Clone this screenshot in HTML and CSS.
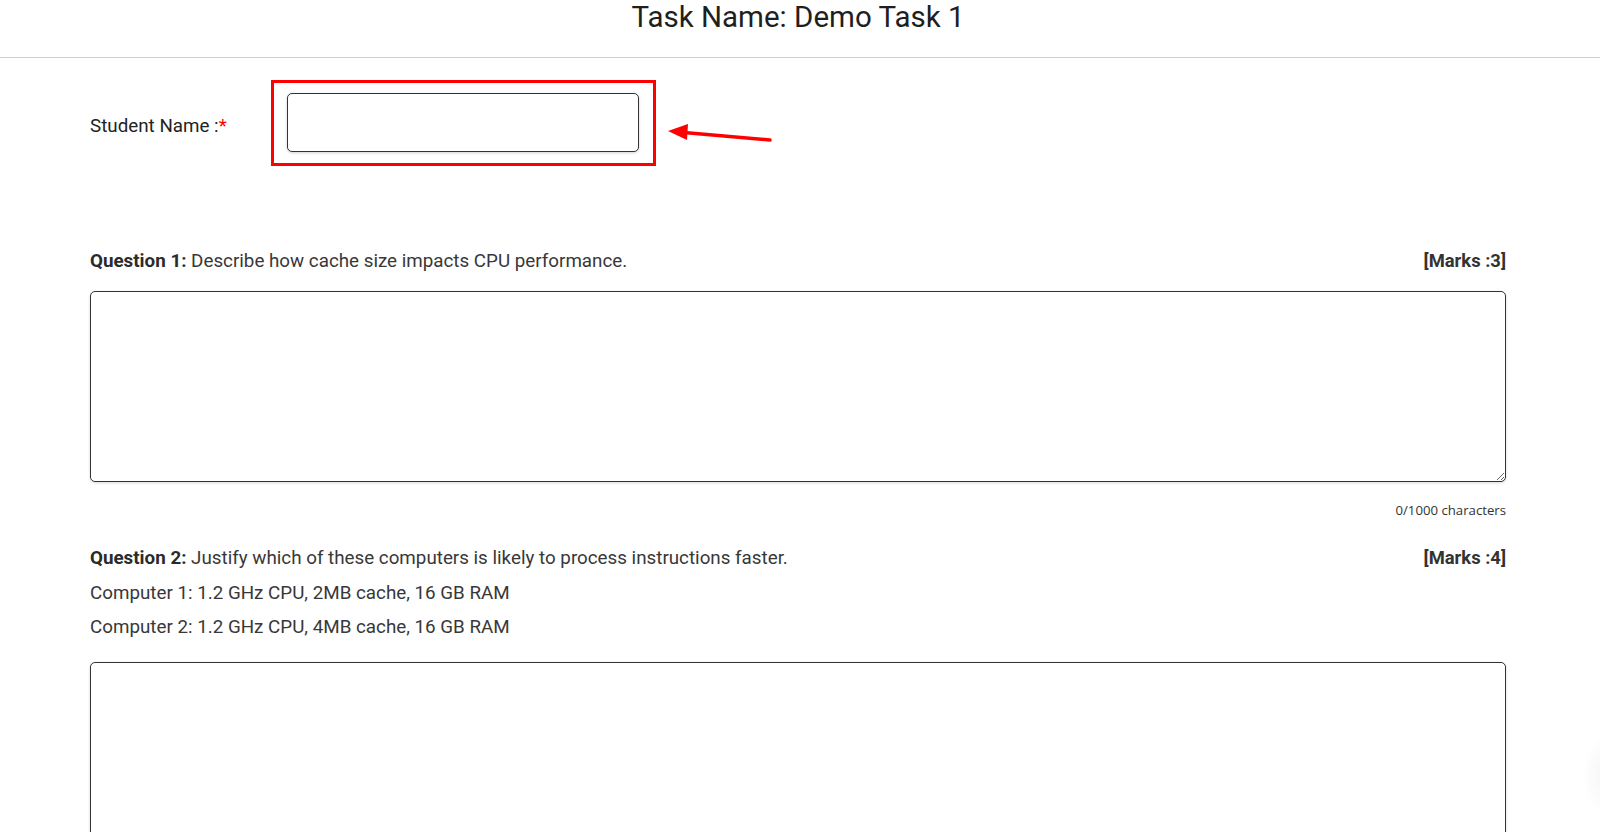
FILE: index.html
```html
<!DOCTYPE html>
<html lang="en">
<head>
<meta charset="utf-8">
<title>Task Name: Demo Task 1</title>
<link rel="stylesheet" href="styles.css">
</head>
<body>
<header class="top-bar">
  <h1 class="task-title">Task Name: Demo Task 1</h1>
</header>
<main class="content">
  <div class="student-row">
    <label class="student-label" for="student">Student Name :<span class="req">*</span></label>
    <div class="input-wrap">
      <input id="student" class="student-input" type="text">
      <span class="highlight-box"></span>
      <svg class="arrow" width="110" height="24" viewBox="0 0 110 24">
        <line x1="104" y1="19" x2="18" y2="11.5" stroke="#f00" stroke-width="3.5" stroke-linecap="round"/>
        <polygon points="2,10 22,3 21,19" fill="#f00"/>
      </svg>
    </div>
  </div>

  <section class="question q1">
    <div class="q-head">
      <p class="q-text"><strong>Question 1:</strong> Describe how cache size impacts CPU performance.</p>
      <strong class="marks">[Marks :3]</strong>
    </div>
    <textarea class="answer"></textarea>
    <div class="count">0/1000 characters</div>
  </section>

  <section class="question q2">
    <div class="q-head">
      <p class="q-text"><strong>Question 2:</strong> Justify which of these computers is likely to process instructions faster.</p>
      <strong class="marks">[Marks :4]</strong>
    </div>
    <p class="q-line">Computer 1: 1.2 GHz CPU, 2MB cache, 16 GB RAM</p>
    <p class="q-line">Computer 2: 1.2 GHz CPU, 4MB cache, 16 GB RAM</p>
    <textarea class="answer answer-2"></textarea>
  </section>
</main>
<div class="float-shadow"></div>
</body>
</html>
```

FILE: styles.css
```css
* { box-sizing: border-box; }
html, body { margin: 0; padding: 0; background: #fff; }
body {
  font-family: Roboto, "Liberation Sans", sans-serif;
  color: #2b2b2b;
  overflow: hidden;
  height: 832px;
}
.top-bar {
  height: 58px;
  border-bottom: 1px solid #cfcfcf;
  display: flex;
  justify-content: center;
  padding-right: 4px;
}
.task-title {
  margin: 0;
  font-weight: 400;
  font-size: 29.5px;
  line-height: 34px;
  color: #1f1f1f;
}
.content {
  padding: 0 94px 0 90px;
}
.student-row {
  display: flex;
  align-items: center;
  margin-top: 35px;
}
.student-label {
  width: 197px;
  font-size: 18.8px;
  color: #222;
  padding-top: 7px;
}
.req { color: #f00; }
.input-wrap {
  position: relative;
}
.student-input {
  display: block;
  width: 352px;
  height: 59px;
  border: 1px solid #333;
  border-radius: 5px;
  box-shadow: 0 1px 3px rgba(0,0,0,0.18);
  font-size: 18px;
  padding: 0 12px;
}
.highlight-box {
  position: absolute;
  left: -16px;
  top: -13px;
  right: -17px;
  bottom: -14px;
  border: 3px solid #f00;
  pointer-events: none;
}
.arrow {
  position: absolute;
  left: 379px;
  top: 28px;
}
.q1 { margin-top: 97px; }
.q2 { margin-top: 22px; }
.q-head {
  display: flex;
  justify-content: space-between;
  align-items: center;
  font-size: 18.8px;
}
.q-text {
  margin: 0;
  line-height: 34px;
  color: #383838;
}
.q-text strong { color: #2b2b2b; }
.marks {
  color: #333;
  font-size: 18.4px;
  line-height: 34px;
}
.q1 .q-head { height: 24px; }
.q-line {
  margin: 0;
  font-size: 18.8px;
  line-height: 34px;
  color: #383838;
}
.q2 .q-head + .q-line { margin-top: 1px; }
.answer {
  display: block;
  width: 100%;
  height: 191px;
  margin-top: 18px;
  border: 1px solid #333;
  border-radius: 5px;
  box-shadow: 0 1px 3px rgba(0,0,0,0.15);
  resize: vertical;
  font-family: inherit;
  font-size: 16px;
}
.answer-2 {
  margin-top: 18px;
  height: 200px;
}
.count {
  margin-top: 19px;
  text-align: right;
  font-family: "Open Sans", "Noto Sans", sans-serif;
  font-size: 13.2px;
  line-height: 18px;
  color: #333;
}
.float-shadow {
  position: fixed;
  right: -52px;
  top: 730px;
  width: 70px;
  height: 90px;
  border-radius: 50%;
  background: radial-gradient(ellipse at center, rgba(0,0,0,0.06), rgba(0,0,0,0) 70%);
}
```
